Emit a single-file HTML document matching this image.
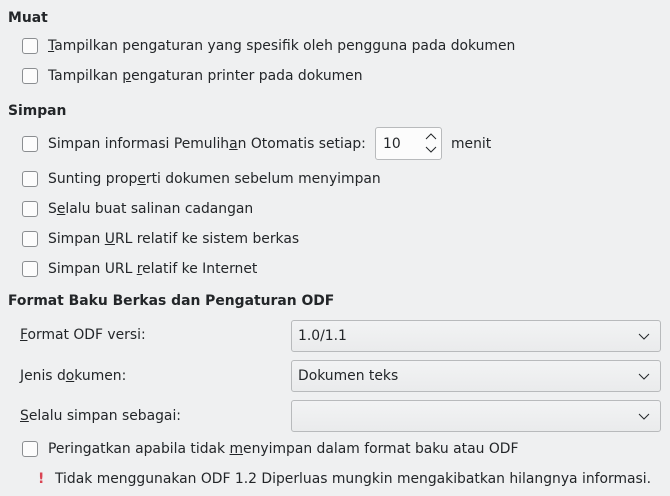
<!DOCTYPE html>
<html><head><style>
body{margin:0;width:670px;height:496px;background:#eff0f1;font-family:"DejaVu Sans","Liberation Sans",sans-serif;font-size:13.9px;color:#232629;position:relative;overflow:hidden}
.a{position:absolute;white-space:nowrap;line-height:18px}
.h{font-weight:bold;left:8px}
.cb{position:absolute;left:22px;width:14px;height:14px;border:1px solid #8b8e91;border-radius:3px;background:#fcfcfc}
.cb+.a{left:48px}
.combo{position:absolute;left:291px;width:368px;height:30px;border:1px solid #b8babc;border-radius:3px;background:linear-gradient(#f2f3f4,#eaebec)}
.combo span{position:absolute;left:6px;top:6px;line-height:18px}
.combo svg{position:absolute;right:10px;top:12px}
u{text-decoration:underline}
</style></head><body>
<div class="a h" style="top:9px">Muat</div>
<div class="cb" style="top:38px"></div><div class="a" style="top:37px"><u>T</u>ampilkan pengaturan yang spesifik oleh pengguna pada dokumen</div>
<div class="cb" style="top:68px"></div><div class="a" style="top:67px">Tampilkan <u>p</u>engaturan printer pada dokumen</div>
<div class="a h" style="top:102px">Simpan</div>
<div class="cb" style="top:136px"></div><div class="a" style="top:135px">Simpan informasi Pemulih<u>a</u>n Otomatis setiap:</div>
<div style="position:absolute;left:375px;top:127px;width:65px;height:31px;border:1px solid #b8babc;border-radius:3px;background:#fcfcfc"></div>
<div class="a" style="left:383px;top:135px">10</div>
<svg style="position:absolute;left:424px;top:131px" width="14" height="24"><path d="M2 8 L7 3 L12 8 M2 16 L7 21 L12 16" fill="none" stroke="#232629" stroke-width="1"/></svg>
<div class="a" style="left:451px;top:135px">menit</div>
<div class="cb" style="top:171px"></div><div class="a" style="top:170px">Sunting prop<u>e</u>rti dokumen sebelum menyimpan</div>
<div class="cb" style="top:201px"></div><div class="a" style="top:200px">S<u>e</u>lalu buat salinan cadangan</div>
<div class="cb" style="top:231px"></div><div class="a" style="top:230px">Simpan <u>U</u>RL relatif ke sistem berkas</div>
<div class="cb" style="top:261px"></div><div class="a" style="top:260px">Simpan URL <u>r</u>elatif ke Internet</div>
<div class="a h" style="top:292px">Format Baku Berkas dan Pengaturan ODF</div>
<div class="a" style="left:20px;top:326px"><u>F</u>ormat ODF versi:</div>
<div class="combo" style="top:320px"><span>1.0/1.1</span><svg width="12" height="7"><path d="M1 1 L6 6 L11 1" fill="none" stroke="#232629"/></svg></div>
<div class="a" style="left:20px;top:367px">Jenis d<u>o</u>kumen:</div>
<div class="combo" style="top:360px"><span>Dokumen teks</span><svg width="12" height="7"><path d="M1 1 L6 6 L11 1" fill="none" stroke="#232629"/></svg></div>
<div class="a" style="left:20px;top:407px"><u>S</u>elalu simpan sebagai:</div>
<div class="combo" style="top:400px"><svg width="12" height="7"><path d="M1 1 L6 6 L11 1" fill="none" stroke="#232629"/></svg></div>
<div class="cb" style="top:441px"></div><div class="a" style="top:440px">Peringatkan apabila tidak <u>m</u>enyimpan dalam format baku atau ODF</div>
<div class="a" style="left:38px;top:470px;color:#da4453;font-weight:bold">!</div>
<div class="a" style="left:55px;top:470px">Tidak menggunakan ODF 1.2 Diperluas mungkin mengakibatkan hilangnya informasi.</div>
</body></html>
